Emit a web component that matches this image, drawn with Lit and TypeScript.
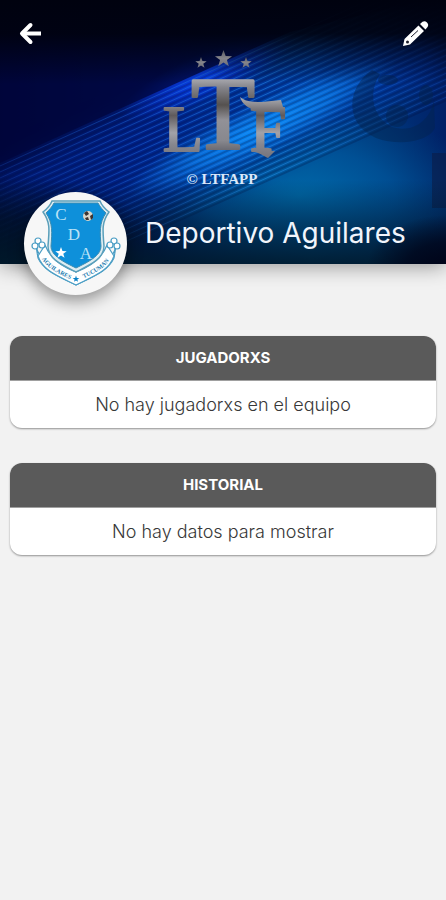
import { LitElement, html, css, svg } from "lit";
import { customElement, property } from "lit/decorators.js";

const STAR = "M0-10 2.4-3.2 9.5-3.1 3.8 1.2 5.9 8.1 0 4 -5.9 8.1 -3.8 1.2 -9.5-3.1 -2.4-3.2Z";

@customElement("banner-art")
class BannerArt extends LitElement {
  static styles = css`
    :host { display: block; }
    svg { display: block; width: 100%; height: 100%; }
    .metal { font-family: "Liberation Serif", serif; text-anchor: middle; stroke-linejoin: round; }
    .big { font-size: 104px; stroke-width: 3; }
    .small { font-size: 66px; stroke-width: 2; }
    .brand { font: 700 15px "Liberation Serif", serif; text-anchor: middle; fill: #dce9fa; }
  `;

  render() {
    const rays = Array.from({ length: 23 }, (_, i) => 166 + i * 6);
    return html`
      <svg viewBox="0 0 446 264" preserveAspectRatio="xMidYMid slice" role="img" aria-label="LTF">
        <defs>
          <linearGradient id="base" x1="0" y1="0" x2="1" y2="0">
            <stop offset="0" stop-color="#000537" /><stop offset=".35" stop-color="#00125c" />
            <stop offset=".7" stop-color="#004c94" /><stop offset="1" stop-color="#002066" />
          </linearGradient>
          <linearGradient id="top" x1="0" y1="0" x2="0" y2="1">
            <stop offset="0" stop-color="#00020f" /><stop offset=".4" stop-color="#00020f" stop-opacity=".92" />
            <stop offset="1" stop-color="#00020f" stop-opacity="0" />
          </linearGradient>
          <linearGradient id="bottom" x1="0" y1="0" x2="0" y2="1">
            <stop offset="0" stop-color="#001a2c" stop-opacity="0" /><stop offset="1" stop-color="#001a2c" stop-opacity=".9" />
          </linearGradient>
          <radialGradient id="lake"><stop offset="0" stop-color="#0068a8" /><stop offset=".5" stop-color="#00569a" stop-opacity=".75" /><stop offset="1" stop-color="#00467e" stop-opacity="0" /></radialGradient>
          <radialGradient id="corner"><stop offset="0" stop-color="#000318" /><stop offset=".5" stop-color="#000318" stop-opacity=".7" /><stop offset="1" stop-color="#000318" stop-opacity="0" /></radialGradient>
          <radialGradient id="cobalt"><stop offset="0" stop-color="#0a48ff" /><stop offset=".5" stop-color="#0838e8" stop-opacity=".6" /><stop offset="1" stop-color="#0838e8" stop-opacity="0" /></radialGradient>
          <radialGradient id="azure"><stop offset="0" stop-color="#0a90ff" /><stop offset=".5" stop-color="#0a80f0" stop-opacity=".7" /><stop offset="1" stop-color="#0a70e0" stop-opacity="0" /></radialGradient>
          <linearGradient id="ray" gradientUnits="userSpaceOnUse" x1="0" y1="0" x2="446" y2="0">
            <stop offset="0" stop-color="#164ab0" stop-opacity=".35" /><stop offset=".35" stop-color="#1d6ee0" stop-opacity=".5" />
            <stop offset=".6" stop-color="#2a96f0" stop-opacity=".5" /><stop offset="1" stop-color="#1a58c8" stop-opacity=".3" />
          </linearGradient>
          <linearGradient id="steel" x1="0" y1="0" x2="0" y2="1">
            <stop offset="0" stop-color="#55555c" /><stop offset=".5" stop-color="#85858b" /><stop offset="1" stop-color="#707078" />
          </linearGradient>
          <linearGradient id="steelT" gradientUnits="userSpaceOnUse" x1="0" y1="76" x2="0" y2="152">
            <stop offset="0" stop-color="#b4b4ba" /><stop offset=".15" stop-color="#85858b" /><stop offset=".38" stop-color="#55514f" />
            <stop offset=".58" stop-color="#929197" /><stop offset=".85" stop-color="#88888e" /><stop offset="1" stop-color="#65656d" />
          </linearGradient>
          <linearGradient id="steelS" gradientUnits="userSpaceOnUse" x1="0" y1="98" x2="0" y2="156">
            <stop offset="0" stop-color="#aaaab0" /><stop offset=".3" stop-color="#5f5a5c" /><stop offset=".6" stop-color="#a2a2a8" />
            <stop offset=".8" stop-color="#87878e" /><stop offset="1" stop-color="#77777f" />
          </linearGradient>
          <filter id="wide" x="-30%" y="-60%" width="160%" height="220%"><feGaussianBlur stdDeviation="13" /></filter>
        </defs>
        <rect width="446" height="264" fill="url(#base)" />
        <ellipse cx="300" cy="195" rx="190" ry="90" fill="url(#lake)" />
        <path d="M-20 180 190 83 300 40 440 20 446 70 200 190 -20 290Z" fill="#0034c0" opacity=".45" filter="url(#wide)" />
        <ellipse rx="95" ry="24" transform="translate(208 76) rotate(-24)" fill="url(#cobalt)" />
        <ellipse rx="150" ry="28" transform="translate(262 128) rotate(-26)" fill="url(#azure)" />
        <path d="M-20 172 210 68 290 32 446-5V-20H-20Z" fill="#00063c" opacity=".75" />
        <g stroke="url(#ray)" stroke-width="1">
          ${rays.map((y) => svg`<path d=${`M-20 ${y + 9} 460 ${y - 207}`} />`)}
        </g>
        <g stroke="#00103f" stroke-opacity=".26" stroke-width="2">
          ${rays.map((y) => svg`<path d=${`M-20 ${y + 12} 460 ${y - 204}`} />`)}
        </g>
        <ellipse cx="0" cy="264" rx="170" ry="90" fill="url(#corner)" />
        <g fill="#04234c" opacity=".42">
          <path fill-rule="evenodd" d="M372 70C346 88 344 124 376 138 400 147 429 141 435 128L434 100C430 124 408 134 390 126 372 116 368 92 380 74Z" />
          <circle cx="397" cy="116" r="11" /><ellipse cx="426" cy="95" rx="7" ry="10" /><ellipse cx="388" cy="80" rx="10" ry="5" />
        </g>
        <path d="M432 153H446V208H432Z" fill="#0a1c48" opacity=".6" />
        <rect width="446" height="84" fill="url(#top)" />
        <rect y="180" width="446" height="84" fill="url(#bottom)" />
        <ellipse cx="446" cy="270" rx="80" ry="55" fill="url(#corner)" />
        <g fill="url(#steel)">
          <path d=${STAR} transform="translate(201 63) scale(.6)" />
          <path d=${STAR} transform="translate(223.500 59) scale(.9)" />
          <path d=${STAR} transform="translate(246 63) scale(.6)" />
        </g>
        <text class="metal small" x="183" y="151" fill="url(#steelS)" stroke="url(#steelS)">L</text>
        <text class="metal big" x="223" y="149" fill="url(#steelT)" stroke="url(#steelT)">T</text>
        <path d="M240 97C246 102 253 102 262 102L281 100 283 107 276 110 253 109C246 107 242 103 240 97ZM257 150 252 152C259 152 263 156 268 158L275 151Z" fill="url(#steelS)" />
        <text class="metal small" x="268" y="151" fill="url(#steelS)" stroke="url(#steelS)">F</text>
        <text class="brand" x="222" y="184">© LTFAPP</text>
      </svg>`;
  }
}

@customElement("team-crest")
class TeamCrest extends LitElement {
  static styles = css`
    :host { display: block; }
    svg { display: block; width: 100%; height: 100%; }
    .letter { font: 17px "Liberation Serif", serif; text-anchor: middle; fill: #b9e2f6; }
    .ribbon { font: 700 6px "Liberation Serif", serif; text-anchor: middle; fill: #1779ae; }
  `;

  render() {
    return html`
      <svg viewBox="0 0 103 103" role="img" aria-label="Escudo de Deportivo Aguilares">
        <defs>
          <path id="left" d="M17 65C22 76 33 81 48 88" />
          <path id="right" d="M56 88C71 81 82 76 87 65" />
        </defs>
        <g fill="#fff" stroke="#4a9dc4" stroke-width="1.200" stroke-linejoin="round">
          <path d="M12 54C15 68 25 75 52 85 79 75 89 68 92 54L90 66C84 79 70 84 52 93 34 84 20 79 14 66Z" />
          <path d="M14 64C19 79 34 84 52 93 70 84 85 79 90 64L83 53C78 66 68 74 52 80 36 74 26 66 21 53Z" />
          <circle cx="14" cy="49" r="3" /><circle cx="11" cy="54" r="3" /><circle cx="18" cy="53" r="3" />
          <circle cx="90" cy="49" r="3" /><circle cx="93" cy="54" r="3" /><circle cx="86" cy="53" r="3" />
        </g>
        <path d="M28 9H76C78 14 81 17 85 20 77 31 79 40 80 54 80 67 66 73 52 80 38 73 24 67 24 54 25 40 27 31 19 20 23 17 26 14 28 9Z" fill="#dfedf2" stroke="#5a9fba" stroke-width="1.500" />
        <path d="M30 11H74C76 15 79 18 82 21 75 31 76 41 77 54 77 64 64 70 52 76 40 70 27 64 27 54 28 41 29 31 22 21 25 18 28 15 30 11Z" fill="#0e90da" stroke="#3c8cb0" />
        <text class="letter" x="37" y="28">C</text>
        <text class="letter" x="50" y="48">D</text>
        <text class="letter" x="62" y="67">A</text>
        <path d=${STAR} transform="translate(37 61) scale(.6)" fill="#fff" />
        <circle cx="64" cy="24" r="5" fill="#d9d4c8" />
        <path d="M60 21 63 19 65 22 62 24ZM66 24 69 22V26L67 28ZM61 26 64 25 65 28 62 28Z" fill="#3c3330" />
        <text class="ribbon"><textPath href="#left" startOffset="50%">AGUILARES</textPath></text>
        <text class="ribbon"><textPath href="#right" startOffset="50%">TUCUMAN</textPath></text>
        <path d=${STAR} transform="translate(52 87) scale(.35)" fill="#0b83c8" />
      </svg>`;
  }
}

@customElement("info-card")
class InfoCard extends LitElement {
  @property() heading = "";
  @property() message = "";

  static styles = css`
    :host { display: block; }
    .card { overflow: hidden; border-radius: 12px; background: #fff; box-shadow: 0 1px 2px rgba(0, 0, 0, 0.4); text-align: center; }
    h2 { margin: 0; padding: 12px; background: #5a5a5a; color: #fff; font-size: 15px; line-height: 20px; font-weight: 700; border-bottom: 1px solid #a0a0a0; }
    p { margin: 0; padding: 12px; color: #383838; font-size: 18px; line-height: 23px; font-weight: 300; }
  `;

  render() {
    return html`<section class="card"><h2>${this.heading}</h2><p>${this.message}</p></section>`;
  }
}

@customElement("app-root")
class AppRoot extends LitElement {
  static styles = css`
    :host { display: block; min-height: 100vh; background: #f2f2f2; font-family: Inter, "Open Sans", sans-serif; }
    header { position: relative; box-sizing: border-box; height: 264px; display: flex; flex-direction: column; justify-content: space-between; box-shadow: 0 2px 20px rgba(0, 0, 0, 0.4); }
    banner-art { position: absolute; inset: 0; overflow: hidden; }
    nav { position: relative; display: flex; justify-content: space-between; padding: 16px 12px; }
    button { display: block; padding: 0; border: 0; background: none; width: 36px; height: 36px; color: #fff; cursor: pointer; }
    button svg { display: block; width: 36px; height: 36px; }
    .team { position: relative; display: flex; align-items: flex-start; gap: 18px; padding: 0 24px; margin-bottom: -31px; }
    .avatar { flex: none; width: 103px; height: 103px; border-radius: 50%; background: #f7f7f7; box-shadow: 0 6px 16px rgba(0, 0, 0, 0.4); }
    h1 { margin: 0; padding-top: 24px; color: #f1f5fc; font-size: 28px; line-height: 34px; font-weight: 400; white-space: nowrap; }
    main { display: flex; flex-direction: column; gap: 35px; padding: 72px 10px 24px; }
  `;

  render() {
    return html`
      <header>
        <banner-art></banner-art>
        <nav>
          <button type="button" aria-label="Volver">
            <svg viewBox="0 0 36 36" fill="none" stroke="currentColor" stroke-width="4"><path d="M29 17.500H11" /><path d="M18.500 9 10 17.500 18.500 26" stroke-linecap="round" stroke-linejoin="round" /></svg>
          </button>
          <button type="button" aria-label="Editar">
            <svg viewBox="0 0 36 36"><path fill="currentColor" d="M5 30 6.500 23 20.500 9.500 26 15 12 28.500ZM22 8 24.500 5.800C26 4.800 27.500 5 29 6.500 30.500 8 30.500 9.500 29.500 11L27.500 13.500Z" /><path d="M13 21 20 14.500" stroke="#1b1d2c" stroke-width="1" /><circle cx="9.500" cy="26" r="1.500" fill="#1b1d2c" /></svg>
          </button>
        </nav>
        <div class="team">
          <team-crest class="avatar"></team-crest>
          <h1>Deportivo Aguilares</h1>
        </div>
      </header>
      <main>
        <info-card heading="JUGADORXS" message="No hay jugadorxs en el equipo"></info-card>
        <info-card heading="HISTORIAL" message="No hay datos para mostrar"></info-card>
      </main>`;
  }
}
